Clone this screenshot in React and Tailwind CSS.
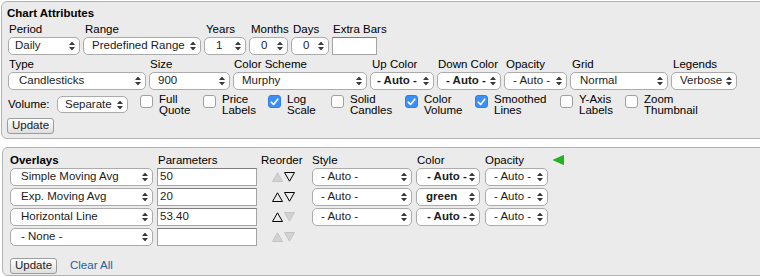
import React from 'react'

function Arrows() {
  return (
    <svg
      className="absolute right-[4px] top-1/2 -translate-y-1/2"
      width="6"
      height="9"
      viewBox="0 0 6 9"
    >
      <path d="M3 0 L6 3.6 L0 3.6 Z M3 9 L0 5.4 L6 5.4 Z" fill="#3a3a3a" />
    </svg>
  )
}

function Select({ value, className = '', pad = 'pl-[8px]', bold = false }) {
  return (
    <div
      className={`relative flex h-[18px] shrink-0 items-center overflow-hidden whitespace-nowrap rounded-[5px] border border-[#ababab] bg-white pr-[11px] text-[#1c1c1c] ${pad} ${bold ? 'font-bold' : ''} ${className}`}
    >
      <span>{value}</span>
      <Arrows />
    </div>
  )
}

function TextBox({ value = '', className = '' }) {
  return (
    <div
      className={`flex h-[18px] shrink-0 items-center border border-[#a3a3a3] border-t-[#7e7e7e] bg-white pl-[2px] text-[#1c1c1c] ${className}`}
    >
      {value}
    </div>
  )
}

function Check({ checked, label1, label2, className = '' }) {
  return (
    <div className={`flex shrink-0 items-start ${className}`}>
      {checked ? (
        <div className="mt-[1px] flex h-[13px] w-[13px] items-center justify-center rounded-[3px] border border-[#2f7fe6] bg-[#3b8ff6]">
          <svg width="9" height="8" viewBox="0 0 9 8">
            <path d="M1.2 4.2 L3.6 6.5 L7.8 1.2" fill="none" stroke="white" strokeWidth="1.6" strokeLinecap="round" strokeLinejoin="round" />
          </svg>
        </div>
      ) : (
        <div className="mt-[1px] h-[13px] w-[13px] rounded-[3px] border border-[#a0a0a0] bg-white" />
      )}
      <div className="ml-[6px] leading-[11px]">
        <div>{label1}</div>
        <div>{label2}</div>
      </div>
    </div>
  )
}

function Field({ label, children, className = '', labelPad = 'pl-[1px]' }) {
  return (
    <div className={`flex shrink-0 flex-col ${className}`}>
      <div className={`h-[15px] whitespace-nowrap leading-[15px] ${labelPad}`}>{label}</div>
      {children}
    </div>
  )
}

function Button({ children }) {
  return (
    <div className="flex h-[16px] w-[47px] items-center justify-center rounded-[3px] border border-[#9c9c9c] bg-gradient-to-b from-white to-[#dedede] text-[#1c1c1c]">
      {children}
    </div>
  )
}

function Tri({ dir, on }) {
  const pts = dir === 'up' ? '0.5,9.5 5.5,0.8 10.5,9.5' : '0.5,0.5 10.5,0.5 5.5,9.2'
  return (
    <svg width="11" height="10" viewBox="0 0 11 10">
      {on ? (
        <polygon points={pts} fill="none" stroke="#000" strokeWidth="1" />
      ) : (
        <polygon points={pts} fill="#d2d2d2" stroke="#c4c4c4" strokeWidth="1" />
      )}
    </svg>
  )
}

const overlays = [
  { name: 'Simple Moving Avg', param: '50', up: false, down: true, color: '- Auto -', style: true },
  { name: 'Exp. Moving Avg', param: '20', up: true, down: true, color: 'green', style: true },
  { name: 'Horizontal Line', param: '53.40', up: true, down: false, color: '- Auto -', style: true },
  { name: '- None -', param: '', up: false, down: false, style: false },
]

export default function App() {
  return (
    <div className="h-[277px] w-[760px] overflow-hidden bg-white font-['Liberation_Sans',Arial,sans-serif] text-[11.5px] text-black">
      {/* Chart Attributes */}
      <div className="ml-px mt-px h-[138px] w-[790px] rounded-[6px] border border-[#b3b3b3] bg-[#ebebeb] pl-[6px] pt-[4px]">
        <div className="-ml-[1px] h-[14px] font-bold leading-[14px]">Chart Attributes</div>

        <div className="mt-[2px] flex gap-[3px]">
          <Field label="Period" className="w-[72px]">
            <Select value="Daily" pad="pl-[6px]" className="w-[72px]" />
          </Field>
          <Field label="Range" className="w-[118px]" labelPad="pl-[2px]">
            <Select value="Predefined Range" pad="pl-[8px]" className="w-[118px]" />
          </Field>
          <Field label="Years" className="w-[42px]" labelPad="pl-[2px]">
            <Select value="1" pad="pl-[11px]" className="w-[42px]" />
          </Field>
          <Field label="Months" className="w-[39px]" labelPad="pl-[2px]">
            <Select value="0" pad="pl-[11px]" className="w-[39px]" />
          </Field>
          <Field label="Days" className="w-[38px]" labelPad="pl-[2px]">
            <Select value="0" pad="pl-[11px]" className="w-[38px]" />
          </Field>
          <Field label="Extra Bars" className="w-[45px]">
            <TextBox className="w-[45px]" />
          </Field>
        </div>

        <div className="mt-[2px] flex gap-[3px]">
          <Field label="Type" className="w-[138px]">
            <Select value="Candlesticks" pad="pl-[10px]" className="w-[138px]" />
          </Field>
          <Field label="Size" className="w-[81px]">
            <Select value="900" className="w-[81px]" />
          </Field>
          <Field label="Color Scheme" className="w-[134px]">
            <Select value="Murphy" className="w-[134px]" />
          </Field>
          <Field label="Up Color" className="w-[64px]" labelPad="pl-[2px]">
            <Select value="- Auto -" bold pad="pl-[6px]" className="w-[64px]" />
          </Field>
          <Field label="Down Color" className="w-[64px]">
            <Select value="- Auto -" bold pad="pl-[8px]" className="w-[64px]" />
          </Field>
          <Field label="Opacity" className="w-[63px]" labelPad="pl-[2px]">
            <Select value="- Auto -" pad="pl-[8px]" className="w-[63px]" />
          </Field>
          <Field label="Grid" className="w-[98px]" labelPad="pl-[2px]">
            <Select value="Normal" pad="pl-[9px]" className="w-[98px]" />
          </Field>
          <Field label="Legends" className="w-[66px]" labelPad="pl-[2px]">
            <Select value="Verbose" className="w-[66px]" />
          </Field>
        </div>

        <div className="mt-[4px] flex items-start">
          <div className="mt-[2px] flex h-[17px] items-center">
            <span className="w-[49px]">Volume:</span>
            <Select value="Separate" pad="pl-[7px]" className="!h-[17px] w-[71px]" />
          </div>
          <Check label1="Full" label2="Quote" className="ml-[12px] w-[63px]" />
          <Check label1="Price" label2="Labels" className="w-[65px]" />
          <Check checked label1="Log" label2="Scale" className="w-[63px]" />
          <Check label1="Solid" label2="Candles" className="w-[74px]" />
          <Check checked label1="Color" label2="Volume" className="w-[70px]" />
          <Check checked label1="Smoothed" label2="Lines" className="w-[85px]" />
          <Check label1="Y-Axis" label2="Labels" className="w-[65px]" />
          <Check label1="Zoom" label2="Thumbnail" />
        </div>

        <div className="mt-[2px] -ml-[1px]">
          <Button>Update</Button>
        </div>
      </div>

      {/* Overlays */}
      <div className="ml-[2px] mt-[8px] h-[129px] w-[790px] rounded-[6px] border border-[#b3b3b3] bg-[#ebebeb] pl-[7px] pt-[5px]">
        <div className="flex h-[14px] items-center leading-[14px]">
          <div className="w-[147px] font-bold">Overlays</div>
          <div className="w-[104px] pl-[1px]">Parameters</div>
          <div className="w-[51px]">Reorder</div>
          <div className="w-[104px]">Style</div>
          <div className="w-[69px] pl-[1px]">Color</div>
          <div className="w-[68px]">Opacity</div>
          <svg width="11" height="10" viewBox="0 0 11 10">
            <polygon points="0.5,5 10.5,0.5 10.5,9.5" fill="#21b821" stroke="#159a15" strokeWidth="0.8" />
          </svg>
        </div>

        <div className="mt-[1px] flex flex-col gap-[2px]">
          {overlays.map((o, i) => (
            <div key={i} className="flex h-[18px] items-center">
              <Select value={o.name} pad="pl-[10px]" className="w-[143px]" />
              <TextBox value={o.param} className="ml-[4px] w-[100px]" />
              <div className="flex w-[55px] items-center gap-[1px] pl-[15px]">
                <Tri dir="up" on={o.up} />
                <Tri dir="down" on={o.down} />
              </div>
              {o.style && (
                <>
                  <Select value="- Auto -" pad="pl-[8px]" className="w-[100px]" />
                  <Select value={o.color} bold pad={o.color === 'green' ? 'pl-[9px]' : 'pl-[10px]'} className="ml-[4px] w-[64px]" />
                  <Select value="- Auto -" pad="pl-[8px]" className="ml-[5px] w-[63px]" />
                </>
              )}
            </div>
          ))}
        </div>

        <div className="mt-[11px] flex items-center">
          <Button>Update</Button>
          <span className="ml-[13px] text-[#1f5f9c]">Clear All</span>
        </div>
      </div>
    </div>
  )
}
